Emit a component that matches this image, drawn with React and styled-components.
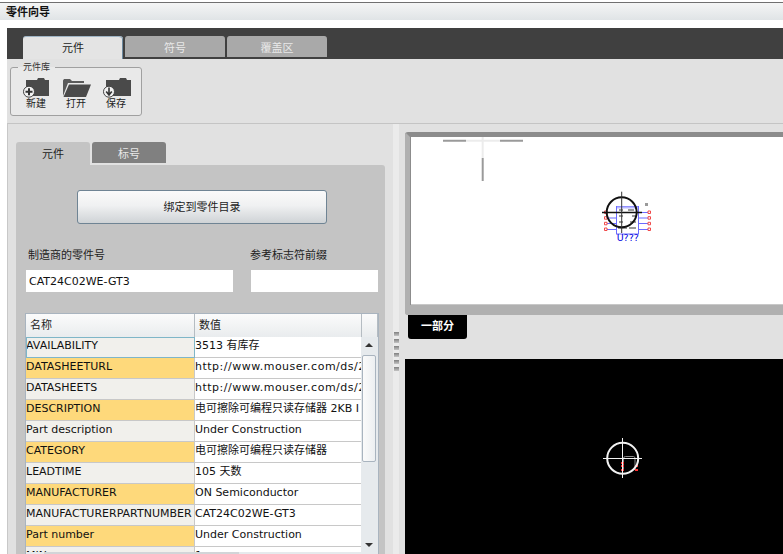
import React from "react";
import styled, { createGlobalStyle } from "styled-components";

const FONT = `"DejaVu Sans", "Noto Sans CJK SC", sans-serif`;

const rows = [
  { name: "AVAILABILITY", value: "3513 有库存", focus: true },
  { name: "DATASHEETURL", value: "http://www.mouser.com/ds/2", mark: true, spaced: true },
  { name: "DATASHEETS", value: "http://www.mouser.com/ds/2", spaced: true },
  { name: "DESCRIPTION", value: "电可擦除可编程只读存储器 2KB I", mark: true },
  { name: "Part description", value: "Under Construction" },
  { name: "CATEGORY", value: "电可擦除可编程只读存储器", mark: true },
  { name: "LEADTIME", value: "105 天数" },
  { name: "MANUFACTURER", value: "ON Semiconductor", mark: true },
  { name: "MANUFACTURERPARTNUMBER", value: "CAT24C02WE-GT3" },
  { name: "Part number", value: "Under Construction", mark: true },
  { name: "MIN", value: "1" },
];

const GlobalStyle = createGlobalStyle`
  html, body {
    margin: 0;
    padding: 0;
    height: 100%;
    overflow: hidden;
    background: #fff;
  }
  #root {
    height: 100%;
  }
`;

const Page = styled.div`
  width: 783px;
  height: 554px;
  overflow: hidden;
  background: #fff;
  font-family: ${FONT};
  font-size: 11px;
  color: #111;
  display: flex;
  flex-direction: column;
`;

const TitleBar = styled.div`
  margin-top: 2px;
  height: 17px;
  flex: none;
  overflow: hidden;
  border-top: 1px solid #707070;
  background: linear-gradient(#f4f5f5, #e0e4e6);
  padding-left: 6px;
  font-weight: bold;
  font-size: 11px;
  line-height: 20px;
  color: #111;
`;

const Shell = styled.div`
  flex: 1;
  min-height: 0;
  margin: 8px 0 0 7px;
  display: flex;
  flex-direction: column;
`;

const MainTabs = styled.div`
  height: 31px;
  flex: none;
  box-sizing: border-box;
  background: #404040;
  padding: 8px 0 0 16px;
  display: flex;
  gap: 2px;
  align-items: flex-start;
`;

const MainTab = styled.div`
  box-sizing: border-box;
  width: 100px;
  height: ${(p) => (p.$active ? "23px" : "21px")};
  border-radius: 3px 3px 0 0;
  background: ${(p) => (p.$active ? "#e4e4e4" : "#a9a9a9")};
  border-top: 1px solid ${(p) => (p.$active ? "#9fb4c4" : "#a9a9a9")};
  box-shadow: ${(p) => (p.$active ? "inset -1px 0 0 #6d8aa0" : "none")};
  color: ${(p) => (p.$active ? "#222" : "#e8e8e8")};
  text-align: center;
  line-height: 23px;
  font-size: 11px;
`;

const Ribbon = styled.div`
  height: 64px;
  flex: none;
  box-sizing: border-box;
  background: #e1e1e1;
  padding: 8px 0 0 3px;
`;

const RibbonGroup = styled.div`
  position: relative;
  box-sizing: border-box;
  width: 132px;
  height: 49px;
  border: 1px solid #a0a0a0;
  border-radius: 3px;
  background: #e9e9e9;
  display: flex;
  padding: 9px 0 0 12px;
  gap: 14px;
`;

const GroupLabel = styled.span`
  position: absolute;
  top: -7px;
  left: 7px;
  padding: 0 5px;
  background: linear-gradient(#e1e1e1 50%, #e9e9e9 50%);
  font-size: 9px;
  line-height: 12px;
  color: #333;
`;

const ToolButton = styled.div`
  width: 26px;
  display: flex;
  flex-direction: column;
  align-items: center;
  font-size: 10px;
  line-height: 12px;
  color: #222;
  svg {
    display: block;
    flex: none;
    margin-bottom: -3px;
  }
`;

const Body = styled.div`
  flex: 1;
  min-height: 0;
  display: flex;
  background: #e1e1e1;
`;

const LeftPane = styled.div`
  width: 386px;
  flex: none;
  box-sizing: border-box;
  border-top: 1px solid #c4c4c4;
  border-left: 1px solid #c8c8c8;
  padding: 18px 0 0 8px;
  overflow: hidden;
`;

const SubTabs = styled.div`
  display: flex;
  gap: 2px;
  height: 23px;
`;

const SubTab = styled.div`
  width: 74px;
  height: ${(p) => (p.$active ? "23px" : "21px")};
  border-radius: 3px 3px 0 0;
  background: ${(p) => (p.$active ? "#c4c4c4" : "#808080")};
  color: ${(p) => (p.$active ? "#222" : "#e8e8e8")};
  text-align: center;
  line-height: 25px;
  font-size: 11px;
`;

const SubPanel = styled.div`
  width: 369px;
  box-sizing: border-box;
  background: #c4c4c4;
  border-radius: 0 3px 0 0;
  padding: 25px 7px 0 9px;
`;

const BindButton = styled.div`
  box-sizing: border-box;
  width: 250px;
  height: 34px;
  margin-left: 52px;
  border: 1px solid #6f8494;
  border-radius: 3px;
  background: linear-gradient(#fafafa, #f0f1f2 45%, #cfd3d6);
  text-align: center;
  line-height: 33px;
  font-size: 11px;
  color: #222;
`;

const Fields = styled.div`
  display: flex;
  gap: 18px;
  margin-top: 22px;
  padding-left: 1px;
`;

const Field = styled.div`
  width: ${(p) => p.$width}px;
  flex: none;
`;

const FieldLabel = styled.div`
  height: 24px;
  line-height: 20px;
  margin-left: ${(p) => p.$indent || 0}px;
  font-size: 11px;
  color: #222;
`;

const FieldValue = styled.div`
  box-sizing: border-box;
  height: 22px;
  background: #fff;
  padding-left: 3px;
  line-height: 23px;
  font-size: 11px;
  color: #111;
`;

const Grid = styled.div`
  position: relative;
  box-sizing: border-box;
  width: 354px;
  height: 244px;
  margin-top: 21px;
  border: 1px solid #a9b4bf;
  background: #fff;
  overflow: hidden;
`;

const GridHead = styled.div`
  display: grid;
  grid-template-columns: 169px 167px 1fr;
  height: 23px;
  background: linear-gradient(#fbfbfb, #e9ecee);
`;

const HeadCell = styled.div`
  box-sizing: border-box;
  border-right: 1px solid #b5bcc2;
  padding-left: 4px;
  line-height: 24px;
  font-size: 11px;
  color: #222;
`;

const GridRows = styled.div`
  width: 336px;
`;

const GridRow = styled.div`
  display: grid;
  grid-template-columns: 169px 167px;
  height: 21px;
`;

const NameCell = styled.div`
  box-sizing: border-box;
  height: 21px;
  border-right: 1px solid #c8c8c8;
  border-bottom: 1px solid #c8c8c8;
  background: ${(p) => (p.$mark ? "#fed97b" : "#f1f0ec")};
  outline: ${(p) => (p.$focus ? "1px solid #7fb6c8" : "none")};
  outline-offset: -1px;
  line-height: 17px;
  white-space: nowrap;
  font-size: 11px;
  color: #111;
`;

const ValueCell = styled.div`
  box-sizing: border-box;
  height: 21px;
  border-right: 1px solid #c8c8c8;
  border-bottom: 1px solid #c8c8c8;
  line-height: 18px;
  white-space: nowrap;
  letter-spacing: ${(p) => (p.$spaced ? "0.5px" : "0")};
  font-size: 11px;
  color: #111;
`;

const ScrollTrack = styled.div`
  position: absolute;
  top: 23px;
  right: 0;
  bottom: 0;
  width: 17px;
  background: #e6eaed;
`;

const ScrollThumb = styled.div`
  position: absolute;
  top: 18px;
  left: 1px;
  width: 14px;
  height: 107px;
  box-sizing: border-box;
  border: 1px solid #a9b4bf;
  border-radius: 2px;
  background: linear-gradient(to right, #fbfbfb, #eceff1);
`;

const ScrollArrow = styled.div`
  position: absolute;
  left: 4px;
  ${(p) => (p.$down ? "bottom: 9px;" : "top: 6px;")}
  width: 0;
  height: 0;
  border-left: 4px solid transparent;
  border-right: 4px solid transparent;
  ${(p) => (p.$down ? "border-top: 4px solid #333;" : "border-bottom: 4px solid #333;")}
`;

const HScrollTrack = styled.div`
  position: absolute;
  left: 0;
  bottom: 0;
  width: 336px;
  height: 4px;
  background: #e6eaed;
`;

const HScrollThumb = styled.div`
  position: absolute;
  left: 18px;
  top: 0;
  width: 195px;
  height: 100%;
  background: #d2d5d8;
`;

const Splitter = styled.div`
  width: 6px;
  flex: none;
  display: flex;
  flex-direction: column;
  align-items: center;
  gap: 3px;
  padding-top: 208px;
  box-sizing: border-box;
  border-top: 1px solid #c4c4c4;
  background: #ebebeb;
`;

const Grip = styled.span`
  width: 5px;
  height: 4px;
  flex: none;
  background: linear-gradient(#808080, #c4c4c4);
`;

const RightPane = styled.div`
  flex: 1;
  min-width: 0;
  box-sizing: border-box;
  border-top: 1px solid #c4c4c4;
  padding: 8px 0 0 6px;
  display: flex;
  flex-direction: column;
`;

const PreviewFrame = styled.div`
  box-sizing: border-box;
  height: 183px;
  flex: none;
  border-radius: 3px 0 0 3px;
  border-style: solid;
  border-color: #8c8c8c #b0b0b0 #b0b0b0 #b0b0b0;
  border-width: 5px 0 10px 5px;
  background: #fff;
  box-shadow: inset 1px 0 0 #8c8c8c, inset 0 -1px 0 #c8c8c8;
  svg {
    display: block;
  }
`;

const PartTab = styled.div`
  width: 59px;
  height: 24px;
  margin-left: 3px;
  flex: none;
  border-radius: 0 0 3px 3px;
  background: #000;
  color: #fff;
  font-size: 11px;
  font-weight: bold;
  text-align: center;
  line-height: 23px;
`;

const BlackPanel = styled.div`
  flex: 1;
  margin-top: 20px;
  background: #000;
  svg {
    display: block;
  }
`;

const FolderIcon = ({ badge }) => (
  <svg width="30" height="24" viewBox="0 0 30 24">
    <path
      d={badge === "plus" ? "M5 3h11l1-2h6l1 2h4v16H5z" : "M5 3h13l1-2h6l1 2h4v16H5z"}
      fill="#4a4a4a"
    />
    <circle cx="8" cy="14.700" r="5.500" fill="#f2f2f2" stroke="#444" strokeWidth="1" />
    {badge === "plus" ? (
      <path d="M4.500 14.700h7M8 11.200v7" stroke="#333" strokeWidth="2" />
    ) : (
      <path d="M8 10.500v6.500M5.200 14.400L8 18l2.800-3.600" stroke="#333" strokeWidth="1.600" fill="none" />
    )}
  </svg>
);

const OpenFolderIcon = () => (
  <svg width="30" height="24" viewBox="0 0 30 24">
    <path d="M2 19V3.500L3 2h6l2 2h12v2H7z" fill="#5a5a5a" />
    <path d="M2.500 20L8 7.500h22L25 20z" fill="#4a4a4a" />
  </svg>
);

const PreviewDrawing = () => (
  <svg width="373" height="168" viewBox="0 0 373 168">
    <path d="M33 3.700h23M90 3.700h23" stroke="#9a9a9a" strokeWidth="2" />
    <path d="M56 3.700h34" stroke="#ececec" strokeWidth="2" />
    <path d="M72.700 0v21" stroke="#ececec" strokeWidth="2" />
    <path d="M72.700 21v23" stroke="#9a9a9a" strokeWidth="2" />
    <rect x="206.500" y="69.500" width="22" height="27.500" fill="#fff" stroke="#6a6aff" />
    <path d="M207 70.500h21" stroke="#b8b8ff" strokeWidth="2" />
    <path d="M195 75.500h11M195 81h11M195 86.500h11M195 92.500h11M229 75.500h11M229 81h11M229 86.500h11M229 92.500h11" stroke="#6a6aff" />
    <path d="M194.500 74h2.500v2.500h-2.500zM194.500 79.700h2.500v2.500h-2.500zM194.500 85.300h2.500v2.500h-2.500zM194.500 91h2.500v2.500h-2.500zM238 74h2.500v2.500H238zM238 79.700h2.500v2.500H238zM238 85.300h2.500v2.500H238zM238 91h2.500v2.500H238z" fill="#fff" stroke="#f04848" />
    <path d="M209 72h4v2h-4zM218 72h6v2h-6zM209 78h4v2h-4zM222 78h5v2h-5zM209 84h4v2h-4zM220 84h6v2h-6zM208 90h9v2h-9zM219 90h7v2h-7zM235 66h3v3h-3z" fill="#9a9a9a" />
    <text x="217.700" y="104" textAnchor="middle" fontSize="9.500" fontFamily="DejaVu Sans" fill="#0000e0">U???</text>
    <circle cx="211.700" cy="75.300" r="15" fill="none" stroke="#111" strokeWidth="2" />
    <path d="M192 75.500h40" stroke="#111" strokeWidth="1.400" />
    <path d="M211.700 54.700v41.300" stroke="#333" strokeWidth="1" />
  </svg>
);

const BlackDrawing = () => (
  <svg width="378" height="195" viewBox="0 0 378 195">
    <path d="M218.500 111V99.500q0-2 2-2h8q1.500 0 1.500 2V111" fill="none" stroke="#8a8a8a" strokeWidth="1" />
    <path d="M216 103h3v2h-3zM216 106h3v2h-3zM216 110h3v2h-3zM230 106h3v2h-3zM230 110h3v2h-3z" fill="#ff3030" />
    <circle cx="217.700" cy="99.300" r="15.500" fill="none" stroke="#f2f2f2" strokeWidth="2" />
    <path d="M198 99.500h39M217.500 79v40" stroke="#f2f2f2" strokeWidth="1" />
  </svg>
);

export default function App() {
  return (
    <Page>
      <GlobalStyle />
      <TitleBar>零件向导</TitleBar>
      <Shell>
        <MainTabs>
          <MainTab $active>元件</MainTab>
          <MainTab>符号</MainTab>
          <MainTab>覆盖区</MainTab>
        </MainTabs>
        <Ribbon>
          <RibbonGroup>
            <GroupLabel>元件库</GroupLabel>
            <ToolButton>
              <FolderIcon badge="plus" />
              新建
            </ToolButton>
            <ToolButton>
              <OpenFolderIcon />
              打开
            </ToolButton>
            <ToolButton>
              <FolderIcon badge="down" />
              保存
            </ToolButton>
          </RibbonGroup>
        </Ribbon>
        <Body>
          <LeftPane>
            <SubTabs>
              <SubTab $active>元件</SubTab>
              <SubTab>标号</SubTab>
            </SubTabs>
            <SubPanel>
              <BindButton>绑定到零件目录</BindButton>
              <Fields>
                <Field $width={207}>
                  <FieldLabel $indent={2}>制造商的零件号</FieldLabel>
                  <FieldValue>CAT24C02WE-GT3</FieldValue>
                </Field>
                <Field $width={127}>
                  <FieldLabel $indent={-1}>参考标志符前缀</FieldLabel>
                  <FieldValue />
                </Field>
              </Fields>
              <Grid>
                <GridHead>
                  <HeadCell>名称</HeadCell>
                  <HeadCell>数值</HeadCell>
                  <HeadCell />
                </GridHead>
                <GridRows>
                  {rows.map((row) => (
                    <GridRow key={row.name}>
                      <NameCell $mark={row.mark} $focus={row.focus}>{row.name}</NameCell>
                      <ValueCell $spaced={row.spaced}>{row.value}</ValueCell>
                    </GridRow>
                  ))}
                </GridRows>
                <ScrollTrack>
                  <ScrollArrow />
                  <ScrollThumb />
                  <ScrollArrow $down />
                </ScrollTrack>
                <HScrollTrack>
                  <HScrollThumb />
                </HScrollTrack>
              </Grid>
            </SubPanel>
          </LeftPane>
          <Splitter>
            <Grip />
            <Grip />
            <Grip />
            <Grip />
            <Grip />
            <Grip />
          </Splitter>
          <RightPane>
            <PreviewFrame>
              <PreviewDrawing />
            </PreviewFrame>
            <PartTab>一部分</PartTab>
            <BlackPanel>
              <BlackDrawing />
            </BlackPanel>
          </RightPane>
        </Body>
      </Shell>
    </Page>
  );
}
